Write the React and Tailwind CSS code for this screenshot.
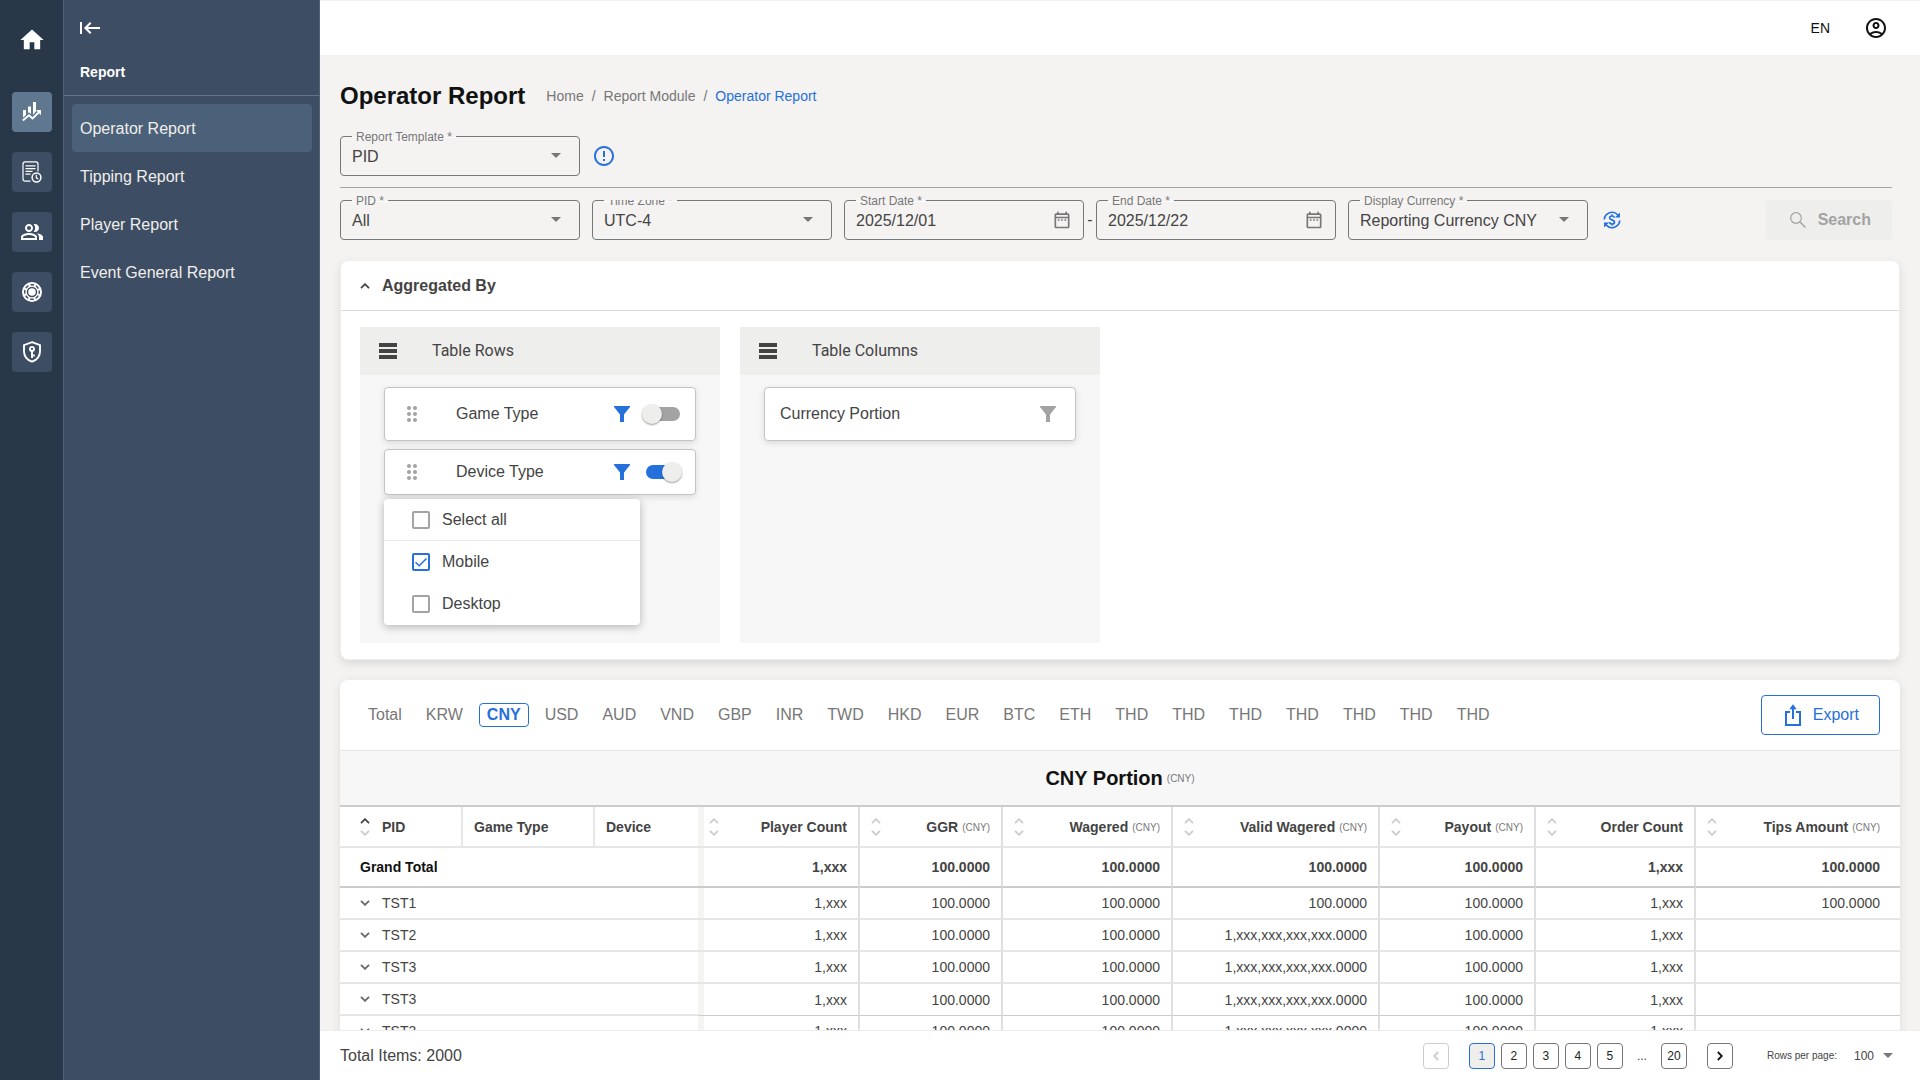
import { useState } from 'react'
import {
  MdHome,
  MdOutlinePeopleAlt,
  MdOutlineAccountCircle,
  MdErrorOutline,
  MdOutlineDateRange,
  MdDragIndicator,
} from 'react-icons/md'

const menuItems = ['Operator Report', 'Tipping Report', 'Player Report', 'Event General Report']

const currencies = [
  'Total', 'KRW', 'CNY', 'USD', 'AUD', 'VND', 'GBP', 'INR', 'TWD', 'HKD',
  'EUR', 'BTC', 'ETH', 'THD', 'THD', 'THD', 'THD', 'THD', 'THD', 'THD',
]

const metricColumns = [
  { label: 'Player Count' },
  { label: 'GGR', unit: 'CNY' },
  { label: 'Wagered', unit: 'CNY' },
  { label: 'Valid Wagered', unit: 'CNY' },
  { label: 'Payout', unit: 'CNY' },
  { label: 'Order Count' },
  { label: 'Tips Amount', unit: 'CNY' },
]

const grandTotal = ['1,xxx', '100.0000', '100.0000', '100.0000', '100.0000', '1,xxx', '100.0000']

const rows = [
  { pid: 'TST1', values: ['1,xxx', '100.0000', '100.0000', '100.0000', '100.0000', '1,xxx', '100.0000'] },
  { pid: 'TST2', values: ['1,xxx', '100.0000', '100.0000', '1,xxx,xxx,xxx,xxx.0000', '100.0000', '1,xxx', ''] },
  { pid: 'TST3', values: ['1,xxx', '100.0000', '100.0000', '1,xxx,xxx,xxx,xxx.0000', '100.0000', '1,xxx', ''] },
  { pid: 'TST3', values: ['1,xxx', '100.0000', '100.0000', '1,xxx,xxx,xxx,xxx.0000', '100.0000', '1,xxx', ''] },
  { pid: 'TST3', values: ['1,xxx', '100.0000', '100.0000', '1,xxx,xxx,xxx,xxx.0000', '100.0000', '1,xxx', ''] },
]

function ChartIcon() {
  return (
    <svg className="w-5 h-5" viewBox="0 0 20 20" fill="none">
      <path d="M1 8h3v7l-3 2zM6 4.500h3v8l-1.500-1.200L6 13zM11 0h3v9.500L11 13z" fill="currentColor" />
      <path d="M.8 18.500 7 13l3.500 3.300L17 9.800" stroke="#5f7890" strokeWidth="4" />
      <path d="M.8 18.500 7 13.300l3.500 3.200L17 10.300" stroke="currentColor" strokeWidth="2" />
      <path d="M13.800 8H19v5.200z" fill="currentColor" />
    </svg>
  )
}

function LogIcon() {
  return (
    <svg className="w-5 h-[22px]" viewBox="0 0 20 22" fill="none" stroke="currentColor" strokeWidth="1.200">
      <path d="M8.500 20.200H3.200A2.200 2.200 0 0 1 1 18V3A2.200 2.200 0 0 1 3.200.800h10.600A2.200 2.200 0 0 1 16 3v7.500" />
      <path d="M3.500 4.800h10M3.500 7.600h10M3.500 10.400h7M3.500 13.200h5" />
      <circle cx="14.500" cy="16.500" r="4.400" strokeWidth="1.500" />
      <path d="M14.300 13.800v3l2 1.300" />
    </svg>
  )
}

function ChipIcon() {
  return (
    <svg className="w-5 h-5" viewBox="0 0 20 20" fill="none" stroke="#3d4d63">
      <circle cx="10" cy="10" r="10" fill="currentColor" stroke="none" />
      <circle cx="10" cy="10" r="7.300" strokeWidth="1.400" strokeDasharray="3.700 2.033" strokeDashoffset="1.850" />
      <circle cx="10" cy="10" r="4.500" strokeWidth="1.500" />
      <path d="m10 6.600 2.900 3.400-2.900 3.400L7.100 10z" fill="currentColor" stroke="none" />
    </svg>
  )
}

function ShieldIcon() {
  return (
    <svg className="w-[18px] h-[22px]" viewBox="0 0 18 22" fill="none" stroke="currentColor" strokeWidth="1.900">
      <path d="M9 1.200 17 4.200v6c0 4.800-3.400 8.800-8 10.500-4.600-1.700-8-5.700-8-10.500v-6z" />
      <circle cx="9" cy="7.900" r="2" />
      <path d="M9 10v7M9 14.500h2.800" />
    </svg>
  )
}

function CollapseIcon() {
  return (
    <svg className="w-5 h-3" viewBox="0 0 20 12" fill="none" stroke="currentColor" strokeWidth="2">
      <path d="M1 0v12M20 6H5.500M10.700.700 5.400 6l5.300 5.300" />
    </svg>
  )
}

function ExchangeIcon() {
  return (
    <svg className="w-[18px] h-[18px]" viewBox="0 0 18 18" fill="none" stroke="currentColor" strokeWidth="1.700">
      <path d="M1.300 8.500A7.700 7.700 0 0 1 14.800 4M16.700 9.500A7.700 7.700 0 0 1 3.200 14" />
      <path d="M17 1.500V6.500h-5zM1 16.500V11.500h5z" fill="currentColor" stroke="none" />
      <path d="M11.400 6.600c-.200-1-1.200-1.600-2.400-1.600-1.400 0-2.400.700-2.400 1.800 0 2.600 4.900 1.500 4.900 4.200 0 1.200-1.100 2-2.500 2s-2.400-.600-2.600-1.800M9 3.400v1.700M9 12.800v1.800" />
    </svg>
  )
}

function SearchIcon() {
  return (
    <svg className="w-4 h-4" viewBox="0 0 16 16" fill="none" stroke="currentColor" strokeWidth="1.200">
      <circle cx="6" cy="6" r="5.300" />
      <path d="m9.800 9.800 5.700 5.700" strokeWidth="1.500" />
    </svg>
  )
}

function ExportIcon() {
  return (
    <svg className="w-4 h-[22px]" viewBox="0 0 16 22" fill="none" stroke="currentColor" strokeWidth="2">
      <path d="M5 8H1v13h14V8h-4M8 15V3" />
      <path d="M4.300 5.200 8 .300l3.700 4.900z" fill="currentColor" stroke="none" />
    </svg>
  )
}

function FilterIcon({ className }) {
  return (
    <svg className={`w-4 h-4 ${className}`} viewBox="0 0 16 16" fill="currentColor">
      <path d="M0 0h16v1l-6 7.500V16H6V8.500L0 1z" />
    </svg>
  )
}

function MenuBars() {
  return (
    <svg className="w-[18px] h-4 text-[#444]" viewBox="0 0 18 16" fill="currentColor">
      <path d="M0 0h18v4H0zM0 6h18v4H0zM0 12h18v4H0z" />
    </svg>
  )
}

function Chevron({ up = false, className = '' }) {
  return (
    <svg className={className} viewBox="0 0 10 6" fill="none" stroke="currentColor" strokeWidth="1.800">
      <path d={up ? 'M1 5.200 5 1.200l4 4' : 'M1 .8l4 4 4-4'} />
    </svg>
  )
}

function Caret({ className = '' }) {
  return (
    <svg className={`w-2.5 h-[5px] text-[#777] pointer-events-none ${className}`} viewBox="0 0 10 5" fill="currentColor">
      <path d="M0 0h10L5 5z" />
    </svg>
  )
}

function SortButton({ label, active = false }) {
  return (
    <button aria-label={`Sort by ${label}`} className="flex flex-col gap-1.5 w-2.5 text-[#ccc]">
      <Chevron up className={`w-2.5 h-1.5 ${active ? 'text-[#444]' : ''}`} />
      <Chevron className="w-2.5 h-1.5" />
    </button>
  )
}

// Outlined field: the label sits in a notch cut into the top border
function Field({ id, label, clipLabel = false, children }) {
  return (
    <div className="relative w-60 h-10 border border-[#777] rounded-sm">
      {children}
      <div className={`absolute left-[11px] -top-px h-4 pointer-events-none ${clipLabel ? 'overflow-hidden' : ''}`}>
        <span className="absolute inset-x-0 top-0 h-0.5 bg-white" />
        <span className="absolute inset-x-0 top-0 h-px bg-[#f4f3f2]" />
        <label htmlFor={id} className="relative block px-1 -mt-[7px] text-xs leading-4 text-[#777] whitespace-nowrap">
          {label}
        </label>
      </div>
    </div>
  )
}

function SelectField({ id, label, value, clipLabel }) {
  return (
    <Field id={id} label={label} clipLabel={clipLabel}>
      <select id={id} className="w-full h-full pt-0.5 pl-[11px] pr-8 text-base text-[#444] appearance-none bg-transparent">
        <option>{value}</option>
      </select>
      <Caret className="absolute right-[18px] top-4" />
    </Field>
  )
}

function DateField({ id, label, value }) {
  return (
    <Field id={id} label={label}>
      <input id={id} type="text" defaultValue={value} className="w-full h-full pt-0.5 pl-[11px] pr-10 text-base text-[#444] bg-transparent" />
      <MdOutlineDateRange className="absolute right-[11px] top-[9px] w-5 h-5 text-[#777]" />
    </Field>
  )
}

function Toggle({ label, checked, onChange }) {
  return (
    <label className="relative flex items-center w-10 h-5 cursor-pointer">
      <input type="checkbox" role="switch" aria-label={label} checked={checked} onChange={onChange} className="peer sr-only" />
      <span className="w-[34px] h-3.5 ml-1 rounded-full bg-[#a3a3a3] peer-checked:bg-[#2670dc]" />
      <span className="absolute left-0 top-0 w-5 h-5 rounded-full bg-[#eeeeed] shadow-[0_1px_2px_rgba(0,0,0,0.4)] peer-checked:translate-x-5" />
    </label>
  )
}

function CheckOption({ label, checked, onChange }) {
  return (
    <label className="flex items-center h-[42px] pl-7 gap-3 text-base text-[#444] cursor-pointer">
      <span className="relative flex w-[18px] h-[18px]">
        <input
          type="checkbox"
          checked={checked}
          onChange={onChange}
          className="w-[18px] h-[18px] appearance-none bg-white border-2 border-[#a3a3a3] rounded-xs checked:border-[#2670dc]"
        />
        {checked && (
          <svg className="absolute inset-0 text-[#2670dc] pointer-events-none" viewBox="0 0 18 18" fill="none" stroke="currentColor" strokeWidth="1.500">
            <path d="m3.500 9.300 3.700 3.500 7.300-7.300" />
          </svg>
        )}
      </span>
      {label}
    </label>
  )
}

function DimensionCard({ label, enabled, onToggle, className, children }) {
  return (
    <div className={`relative flex items-center pl-[15px] pr-[13px] bg-white border border-[#c4c4c4] rounded-sm shadow-[0_2px_6px_rgba(0,0,0,0.12)] ${className}`}>
      <MdDragIndicator className="w-6 h-6 text-[#a3a3a3]" />
      <span className="flex-1 pl-8 text-base text-[#444]">{label}</span>
      <button aria-label={`Filter ${label}`} className="mr-3">
        <FilterIcon className="text-[#2670dc]" />
      </button>
      <Toggle label={label} checked={enabled} onChange={onToggle} />
      {children}
    </div>
  )
}

function RailButton({ label, active = false, children }) {
  return (
    <button
      aria-label={label}
      className={`flex items-center justify-center w-10 h-10 rounded-sm text-white ${active ? 'bg-[#5f7890]' : 'bg-[#3d4d63]'}`}
    >
      {children}
    </button>
  )
}

function Sidebar() {
  return (
    <aside className="flex shrink-0">
      <nav className="flex flex-col items-center w-16 bg-[#293848] border-r border-[#4f6077]">
        <a href="#home" aria-label="Home" className="mt-[26px] mb-[38px] text-white">
          <MdHome className="w-7 h-7" />
        </a>
        <div className="flex flex-col gap-5">
          <RailButton label="Reports" active><ChartIcon /></RailButton>
          <RailButton label="Logs"><LogIcon /></RailButton>
          <RailButton label="Players"><MdOutlinePeopleAlt className="w-6 h-6" /></RailButton>
          <RailButton label="Games"><ChipIcon /></RailButton>
          <RailButton label="Security"><ShieldIcon /></RailButton>
        </div>
      </nav>
      <div className="w-64 bg-[#3d4d63] border-r border-[#4f6077]">
        <div className="flex flex-col items-start h-24 pl-4 pt-[22px] border-b border-[#60748e] text-white">
          <button aria-label="Collapse menu"><CollapseIcon /></button>
          <h2 className="mt-7 text-sm leading-5 font-bold">Report</h2>
        </div>
        <ul className="pl-2 pr-[7px] pt-2">
          {menuItems.map((item, index) => (
            <li key={item}>
              <a
                href="#report"
                className={`flex items-center h-12 px-2 pt-0.5 rounded-sm text-base text-[#f0eeeb] ${index === 0 ? 'bg-[#4b6179]' : ''}`}
              >
                {item}
              </a>
            </li>
          ))}
        </ul>
      </div>
    </aside>
  )
}

function AggregatedBy() {
  const [enabled, setEnabled] = useState({ game: false, device: true })
  const [devices, setDevices] = useState({ Mobile: true, Desktop: false })
  const allSelected = devices.Mobile && devices.Desktop

  return (
    <section className="mt-5 bg-white border border-[#efefee] rounded-lg shadow-[0_4px_10px_rgba(0,0,0,0.1)]">
      <button className="flex items-center w-full h-[50px] pl-[19px] gap-3 border-b border-[#dcdcdc] text-base font-bold text-[#444]">
        <Chevron up className="w-2.5 h-1.5" />
        Aggregated By
      </button>
      <div className="flex gap-5 px-[19px] py-4">
        <div className="w-90 bg-[#f7f7f7]">
          <div className="flex items-center h-12 pl-[19px] gap-[35px] bg-[#eeeeed] font-[Roboto,sans-serif] text-base text-[#444]">
            <MenuBars />
            Table Rows
          </div>
          <div className="flex flex-col gap-2 min-h-[268px] px-6 pt-3">
            <DimensionCard
              label="Game Type"
              className="h-[54px]"
              enabled={enabled.game}
              onToggle={() => setEnabled({ ...enabled, game: !enabled.game })}
            />
            <DimensionCard
              label="Device Type"
              className="h-[46px]"
              enabled={enabled.device}
              onToggle={() => setEnabled({ ...enabled, device: !enabled.device })}
            >
              <div className="absolute -left-px top-full mt-[5px] w-64 bg-white rounded-sm shadow-[0_2px_8px_rgba(0,0,0,0.28)]">
                <CheckOption
                  label="Select all"
                  checked={allSelected}
                  onChange={() => setDevices({ Mobile: !allSelected, Desktop: !allSelected })}
                />
                <div className="h-px -mt-px bg-[#ececec]" />
                {Object.keys(devices).map((name) => (
                  <CheckOption
                    key={name}
                    label={name}
                    checked={devices[name]}
                    onChange={() => setDevices({ ...devices, [name]: !devices[name] })}
                  />
                ))}
              </div>
            </DimensionCard>
          </div>
        </div>
        <div className="w-90 bg-[#f7f7f7]">
          <div className="flex items-center h-12 pl-[19px] gap-[35px] bg-[#eeeeed] font-[Roboto,sans-serif] text-base text-[#444]">
            <MenuBars />
            Table Columns
          </div>
          <div className="px-6 pt-3">
            <div className="flex items-center justify-between h-[54px] pl-[15px] pr-[19px] bg-white border border-[#c4c4c4] rounded-sm shadow-[0_2px_6px_rgba(0,0,0,0.12)] text-base text-[#444]">
              Currency Portion
              <button aria-label="Filter Currency Portion">
                <FilterIcon className="text-[#a3a3a3]" />
              </button>
            </div>
          </div>
        </div>
      </div>
    </section>
  )
}

function metricCell(index) {
  const first = index === 0 ? 'shadow-[inset_6px_0_0_#f4f4f3]' : ''
  const edge = index === metricColumns.length - 1 ? 'pr-5' : 'pr-[11px] border-r-2 border-r-[#dfdfdf]'
  return `${first} ${edge}`
}

function ReportTable() {
  return (
    <table className="w-full table-fixed border-separate border-spacing-0 text-sm text-[#444]">
      <colgroup>
        <col className="w-[123px]" />
        <col className="w-[132px]" />
        <col className="w-[103px]" />
        <col className="w-[162px]" />
        <col className="w-[143px]" />
        <col className="w-[170px]" />
        <col className="w-[207px]" />
        <col className="w-[156px]" />
        <col className="w-[160px]" />
        <col />
      </colgroup>
      <thead>
        <tr className="h-[41px]">
          <th className="pl-5 text-left border-b-2 border-r-2 border-[#e6e6e6]">
            <div className="flex items-center gap-3">
              <SortButton label="PID" active />
              PID
            </div>
          </th>
          <th className="pl-[11px] text-left border-b-2 border-r-2 border-[#e6e6e6]">Game Type</th>
          <th className="pl-[11px] text-left border-b-2 border-[#e6e6e6]">Device</th>
          {metricColumns.map((column, index) => (
            <th key={column.label} className={`pl-[11px] border-b-2 border-b-[#e6e6e6] ${metricCell(index)}`}>
              <div className="flex items-center justify-between">
                <SortButton label={column.label} />
                <span className="flex items-center gap-1">
                  {column.label}
                  {column.unit && <span className="pt-0.5 leading-4 text-[10px] font-normal text-[#777]">({column.unit})</span>}
                </span>
              </div>
            </th>
          ))}
        </tr>
      </thead>
      <tbody>
        <tr className="h-10 font-bold">
          <th colSpan={3} className="pl-5 text-left text-[#111] border-b-2 border-[#ccc]">Grand Total</th>
          {grandTotal.map((value, index) => (
            <td key={index} className={`text-right border-b-2 border-b-[#ccc] ${metricCell(index)}`}>{value}</td>
          ))}
        </tr>
        {rows.map((row, rowIndex) => (
          <tr key={rowIndex} className="h-8">
            <td colSpan={3} className="pl-5 border-b-2 border-[#e6e6e6]">
              <button className="flex items-center gap-3">
                <Chevron className="w-2.5 h-1.5 text-[#666]" />
                {row.pid}
              </button>
            </td>
            {row.values.map((value, index) => (
              <td
                key={index}
                className={`text-right ${rowIndex === 3 ? 'border-b border-b-[#ccc]' : 'border-b-2 border-b-[#e6e6e6]'} ${metricCell(index)}`}
              >
                {value}
              </td>
            ))}
          </tr>
        ))}
      </tbody>
    </table>
  )
}

function ReportPanel() {
  const [currency, setCurrency] = useState(2)

  return (
    <section className="mt-5 bg-white rounded-lg shadow-[0_2px_10px_rgba(0,0,0,0.1)]">
      <div className="flex items-center justify-between h-[71px] px-5 border-b border-[#e6e6e6]">
        <div className="flex gap-2">
          {currencies.map((name, index) => (
            <button
              key={index}
              onClick={() => setCurrency(index)}
              className={`h-6 px-[7px] border rounded-sm text-base leading-5 ${
                index === currency ? 'border-[#2670dc] text-[#2670dc] font-bold' : 'border-transparent text-[#777]'
              }`}
            >
              {name}
            </button>
          ))}
        </div>
        <button className="flex items-center h-10 px-5 gap-3 border border-[#2670dc] rounded-sm text-base text-[#2670dc]">
          <span className="pl-[3px]"><ExportIcon /></span>
          Export
        </button>
      </div>
      <div className="flex items-center justify-center h-14 gap-1 bg-[#f7f7f7] border-b-2 border-[#ccc]">
        <h2 className="text-xl font-bold text-[#111]">CNY Portion</h2>
        <span className="text-[10px] text-[#777]">(CNY)</span>
      </div>
      <ReportTable />
    </section>
  )
}

function PageButton({ children, active = false }) {
  return (
    <button
      className={`w-[26px] h-[26px] border rounded-sm text-xs ${
        active ? 'bg-[#eeeeed] border-[#2670dc] text-[#2670dc]' : 'border-[#777] text-[#222]'
      }`}
    >
      {children}
    </button>
  )
}

function Footer() {
  return (
    <footer className="flex items-center justify-between shrink-0 h-[50px] pl-5 pr-[27px] bg-white border-t border-[#ececec] text-[#444]">
      <p className="text-base">Total Items: 2000</p>
      <div className="flex items-center">
        <button aria-label="Previous page" disabled className="flex items-center justify-center w-[26px] h-[26px] border border-[#ccc] rounded-sm text-[#ccc]">
          <Chevron className="w-2.5 h-1.5 rotate-90" />
        </button>
        <div className="flex items-center gap-1.5 mx-5">
          <PageButton active>1</PageButton>
          <PageButton>2</PageButton>
          <PageButton>3</PageButton>
          <PageButton>4</PageButton>
          <PageButton>5</PageButton>
          <span className="w-[26px] text-center text-xs">...</span>
          <PageButton>20</PageButton>
        </div>
        <button aria-label="Next page" className="flex items-center justify-center w-[26px] h-[26px] border border-[#777] rounded-sm text-[#111]">
          <Chevron className="w-2.5 h-1.5 -rotate-90" />
        </button>
        <label htmlFor="rows-per-page" className="ml-[34px] text-[10px]">Rows per page:</label>
        <div className="relative flex items-center ml-[17px]">
          <select id="rows-per-page" className="w-[39px] h-6 text-xs appearance-none bg-transparent">
            <option>100</option>
          </select>
          <Caret className="absolute right-0" />
        </div>
      </div>
    </footer>
  )
}

export default function App() {
  return (
    <div className="flex h-screen overflow-hidden bg-[#f4f3f2] font-['Liberation_Sans',Arial,sans-serif]">
      <Sidebar />
      <div className="flex flex-col flex-1 min-w-0">
        <header className="flex items-center justify-end shrink-0 h-[55px] pr-8 gap-[34px] bg-white border-t border-[#f4f3f2] text-[#111]">
          <button className="text-sm">EN</button>
          <button aria-label="Account"><MdOutlineAccountCircle className="w-6 h-6" /></button>
        </header>
        <main className="flex-1 min-h-0 px-5 pt-[25px] overflow-y-auto [scrollbar-width:none]">
          <div className="flex items-center gap-[21px]">
            <h1 className="text-2xl leading-8 font-bold text-[#111]">Operator Report</h1>
            <nav className="flex gap-2 text-sm text-[#777]">
              <a href="#home">Home</a>
              <span>/</span>
              <a href="#module">Report Module</a>
              <span>/</span>
              <a href="#report" className="text-[#2670dc]">Operator Report</a>
            </nav>
          </div>
          <div className="flex items-center gap-3 mt-6 mr-2 pb-[11px] border-b border-[#a3a3a3]">
            <SelectField id="template" label="Report Template *" value="PID" />
            <MdErrorOutline className="w-6 h-6 text-[#2670dc]" />
          </div>
          <div className="flex items-center mt-3 mr-2">
            <SelectField id="pid" label="PID *" value="All" />
            <div className="w-3" />
            <SelectField id="timezone" label="Time Zone *" value="UTC-4" clipLabel />
            <div className="w-3" />
            <DateField id="start" label="Start Date *" value="2025/12/01" />
            <span className="w-3 text-center text-base text-[#444]">-</span>
            <DateField id="end" label="End Date *" value="2025/12/22" />
            <div className="w-3" />
            <SelectField id="currency" label="Display Currency *" value="Reporting Currency CNY" />
            <button aria-label="Refresh exchange rates" className="ml-[15px] text-[#2670dc]"><ExchangeIcon /></button>
            <button disabled className="flex items-center h-10 ml-auto pl-6 pr-[21px] gap-3 rounded-sm bg-[#eeeeed] text-base font-bold text-[#a3a3a3]">
              <SearchIcon />
              Search
            </button>
          </div>
          <AggregatedBy />
          <ReportPanel />
        </main>
        <Footer />
      </div>
    </div>
  )
}
